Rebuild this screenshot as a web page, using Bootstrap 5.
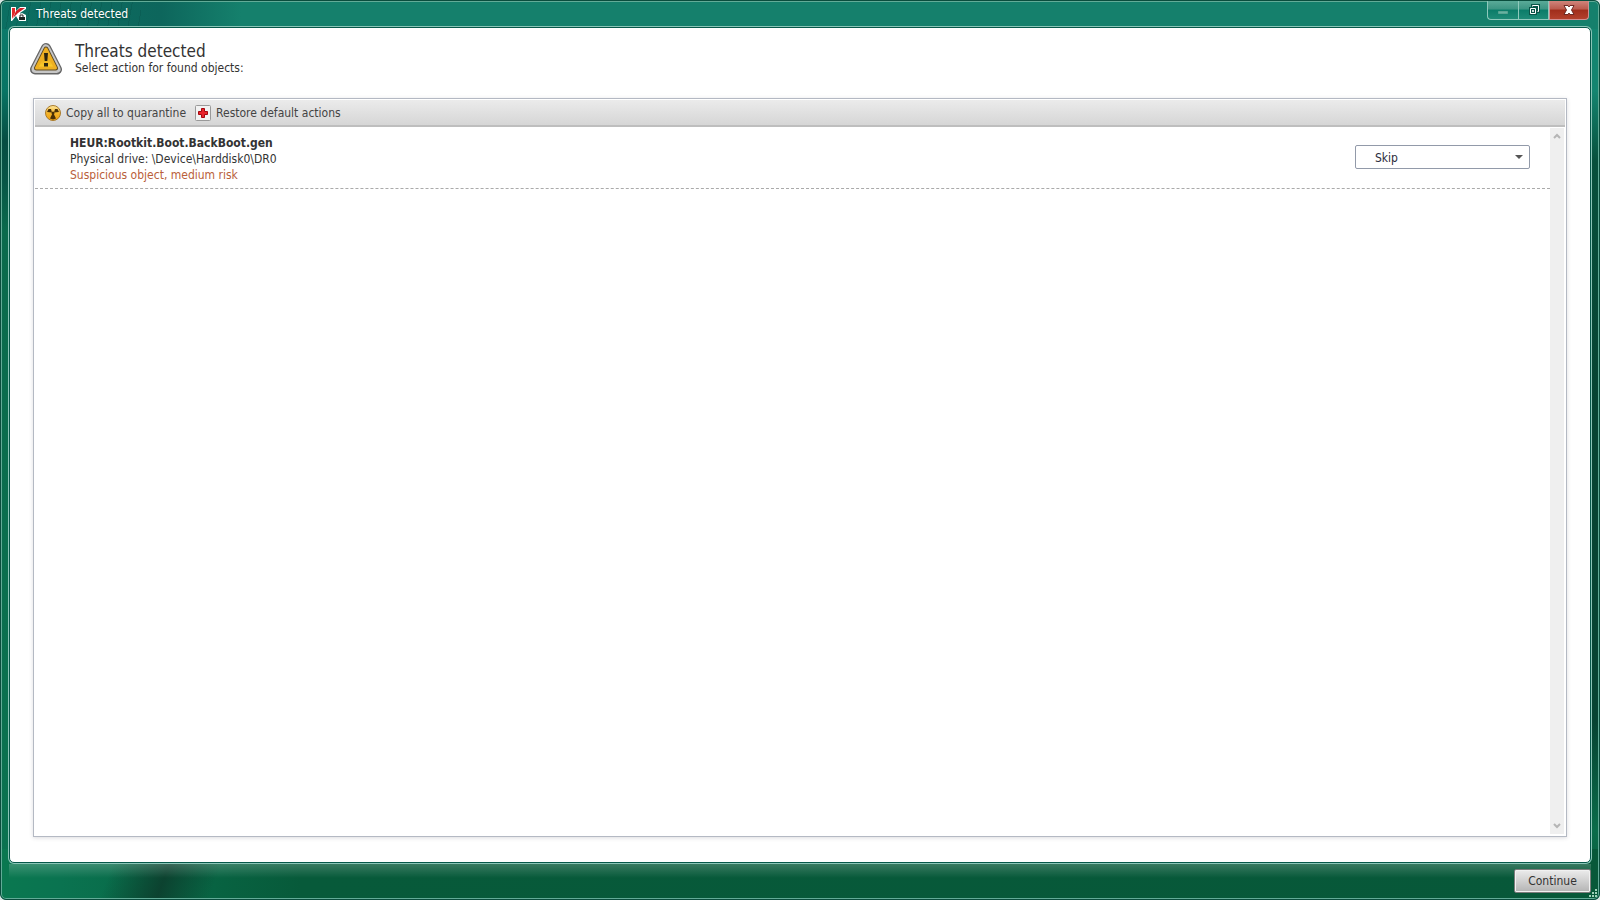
<!DOCTYPE html>
<html lang="en">
<head>
<meta charset="utf-8">
<meta name="viewport" content="width=device-width, initial-scale=1">
<title>Threats detected</title>
<link rel="stylesheet" href="https://cdn.jsdelivr.net/npm/bootstrap@5.3.0/dist/css/bootstrap.min.css">
<style>
  body { font-family: "DejaVu Sans Condensed", "Noto Sans", sans-serif; font-size: 12px; line-height: 16px; color: #333; background: #d9e4e2; }
  .app-window {
    border: 1px solid #0a4d3d; border-radius: 6px; overflow: hidden; padding: 0 8px 6px;
    box-shadow: inset 0 0 0 1px #62ab97;
    background:
      linear-gradient(110deg, transparent 28%, rgba(12,62,45,.9) 52%, transparent 74%) 50px 100% / 220px 50px no-repeat,
      linear-gradient(90deg, #0a7850 0, #0a7350 60px, #075a3a 300px, #075839 100%) 0 100% / 100% 50px no-repeat,
      repeating-linear-gradient(100deg, transparent 0 9px, rgba(0,50,45,.15) 9px 10px) 0 0 / 140px 28px no-repeat,
      linear-gradient(90deg, #0b6f62 0, #0d665c 160px, #15806c 240px, #15806c 100%) 0 0 / 100% 28px no-repeat,
      linear-gradient(180deg, #0c7c6c 0, #087464 90px, #064d42 140px, #075546 180px, #0a6a4c 230px, #0a7350 100%) 0 0 / 20px 100% no-repeat,
      linear-gradient(180deg, #148570 0, #148570 90px, #07503c 160px, #064332 400px, #064332 720px, #0a6c4a 830px, #075839 100%) 100% 0 / 20px 100% no-repeat,
      #0a6c50;
  }
  .title-bar { height: 25px; padding: 0 2px 0 2px; color: #fff; }
  .title-text { padding-top: 5px; gap: 9px; text-shadow: 0 1px 2px #04483c; }
  .win-btn { height: 19px; width: 31px; padding: 0; border: 1px solid #8ec9bc; border-top: 0; border-radius: 0; background: linear-gradient(#5aaa98 0, #3c9583 45%, #0b7c69 50%, #1e8b77 100%); }
  .win-min { border-bottom-left-radius: 4px; border-right: 0; }
  .win-close { width: 40px; border-color: #cf8f92; border-bottom-right-radius: 4px; background: linear-gradient(#d0847b 0, #bb5a4d 45%, #a02d1b 50%, #b3402c 100%); }
  .client-area { background: #fff; border: 1px solid #07584a; border-radius: 5px; padding: 14px 22px 25px 20px; box-shadow: 0 0 0 1px #8ac5b7; margin-top: 1px; }
  .page-heading { font-size: 17px; line-height: 18px; margin: 0; font-weight: 400; }
  .head-row { padding-bottom: 22px; gap: 13px; }
  .threat-panel { margin-left: 3px; margin-right: 1px; border: 1px solid #b4b9c3; padding: 1px; box-shadow: 0 1px 4px rgba(60,60,80,.18); background: #fff; }
  .tool-strip { height: 27px; background: linear-gradient(#ebebeb, #d6d6d6); border-bottom: 2px solid #bebebe; padding-left: 10px; gap: 9px; }
  .tool-btn { border: 0; background: none; padding: 0; color: #444; gap: 5px; }
  .threat-item { border-bottom: 1px dashed #aaa; padding: 8px 20px 5px 35px; }
  .risk-text { color: #b9603a; }
  .action-select { width: 175px; height: 24px; margin-top: 10px; font-size: 12px; line-height: 16px; padding: 4px 24px 2px 19px; border: 1px solid #929aa9; border-radius: 2px; color: #2b2b3a; background-size: 8px 4px; background-position: right 6px center; background-image: url("data:image/svg+xml,%3csvg xmlns='http://www.w3.org/2000/svg' viewBox='0 0 8 4'%3e%3cpath fill='%23555' d='M0 0h8L4 4z'/%3e%3c/svg%3e"); }
  .scroll-track { width: 14px; background: #efefef; margin: 1px 1px 1px 0; padding: 4px 0; }
  .bottom-bar { margin-top: 1px; padding-top: 5px; background: linear-gradient(rgba(255,255,255,.2), transparent 14px); }
  .continue-btn { width: 77px; height: 24px; padding: 0; color: #333; border: 1px solid #7c7c7c; border-radius: 2px; background: linear-gradient(#ececec, #b4b4b4); box-shadow: inset 0 0 0 1px #f1f1f1; }
  .size-grip { right: 1px; bottom: 1px; }
</style>
</head>
<body>
<div class="app-window position-relative d-flex flex-column vh-100">
  <header class="title-bar d-flex justify-content-between align-items-start flex-shrink-0">
    <div class="title-text d-flex align-items-center">
      <svg width="16" height="16" viewBox="0 0 16 16" aria-hidden="true">
        <path d="M0 1h5v4l4-4h6v2L9 7l5 7v1H8L5 10l-4 5H0z" fill="#fff"/>
        <path d="M1 2h3v5l-3 6z" fill="#e02a2a"/><path d="M2 12l3-7 4-3h5L7 7z" fill="#d11f26"/>
        <path d="M7 9l4-2 4 2v6H8V12z" fill="#fff"/><path d="M8 11h6v3H8z" fill="#1c2422"/><path d="M9 11V9h3v2" fill="none" stroke="#1c2422"/>
      </svg>
      <span>Threats detected</span>
    </div>
    <div class="d-flex">
      <button class="win-btn win-min d-flex align-items-center justify-content-center" aria-label="Minimize"><svg width="12" height="12" viewBox="0 0 12 12"><path d="M1.500 7.500h9v2h-9z" fill="#66b3a2" stroke="#5aa493"/></svg></button>
      <button class="win-btn d-flex align-items-center justify-content-center" aria-label="Restore"><svg width="12" height="12" viewBox="0 0 12 12"><path d="M4.500 3.500v-2h6v6h-2" fill="none" stroke="#0a5548" stroke-width="3"/><path d="M1 3h8v8H1z" fill="#0a5548"/><path d="M4.500 2.500v-1h6v6h-1M2.500 4.500h5v5h-5z" fill="none" stroke="#fff"/><path d="M4.500 6.500h1v1h-1z" stroke="#fff" fill="#fff"/></svg></button>
      <button class="win-btn win-close d-flex align-items-center justify-content-center" aria-label="Close"><svg width="12" height="12" viewBox="0 0 12 12"><path d="M1 1.500h4l1 1.500 1-1.500h4L8.500 6l2.500 4.500H7L6 9l-1 1.500H1L3.500 6z" fill="#fff" stroke="#6e2a25"/></svg></button>
    </div>
  </header>
  <main class="client-area d-flex flex-column flex-grow-1">
    <div class="head-row d-flex">
      <svg width="32" height="34" viewBox="0 0 32 34" aria-hidden="true">
        <defs>
          <linearGradient id="metal" x2="0" y2="1"><stop stop-color="#777"/><stop offset=".5" stop-color="#d8d8d8"/><stop offset="1" stop-color="#777"/></linearGradient>
          <linearGradient id="amber" x2="0" y2="1"><stop stop-color="#f0a51c"/><stop offset=".5" stop-color="#e9a91f"/><stop offset="1" stop-color="#ffd52e"/></linearGradient>
        </defs>
        <path d="M16 6L27 27.500H5z" fill="#666" stroke="#666" stroke-width="10" stroke-linejoin="round"/>
        <path d="M16 6.500L26.500 27h-21z" fill="url(#metal)" stroke="#c6c6c6" stroke-width="8" stroke-linejoin="round"/>
        <path d="M16 7L25.500 26h-19z" fill="#5e4a22" stroke="#5e4a22" stroke-width="5" stroke-linejoin="round"/>
        <path d="M16 7L25.500 26h-19z" fill="url(#amber)" stroke="#eeb022" stroke-width="3" stroke-linejoin="round"/>
        <path d="M14 11h4l-.7 8h-2.600zM14 21h4v3.500h-4z" fill="#2b2410"/>
      </svg>
      <div>
        <h1 class="page-heading">Threats detected</h1>
        <p class="m-0">Select action for found objects:</p>
      </div>
    </div>
    <section class="threat-panel d-flex flex-column flex-grow-1">
      <div class="tool-strip d-flex align-items-center">
        <button class="tool-btn d-flex align-items-center">
          <svg width="16" height="16" viewBox="0 0 16 16" aria-hidden="true">
            <defs><linearGradient id="gold" x2="0" y2="1"><stop stop-color="#ffe9a0"/><stop offset=".5" stop-color="#f5b52a"/><stop offset="1" stop-color="#f0a010"/></linearGradient></defs>
            <circle cx="8" cy="8" r="7.500" fill="url(#gold)" stroke="#a87a2c"/>
            <path d="M2 7l1.500-3L6 4l1 3.500zM14 7l-1.500-3L10 4 9 7.500zM5 13.500L7.200 9h1.600l2.200 4.500-3 1z" fill="#4a3008"/>
            <circle cx="8" cy="8" r="1.500" fill="#4a3008"/>
          </svg>
          Copy all to quarantine
        </button>
        <button class="tool-btn d-flex align-items-center">
          <svg width="16" height="16" viewBox="0 0 16 16" aria-hidden="true">
            <rect x=".5" y=".5" width="15" height="15" rx="1" fill="#f2f2f2" stroke="#999"/>
            <path d="M6.500 3.500h3v3h3v3h-3v3h-3v-3h-3v-3h3z" fill="#e8232b" stroke="#a5060d"/>
          </svg>
          Restore default actions
        </button>
      </div>
      <div class="d-flex flex-grow-1">
        <div class="flex-grow-1">
          <div class="threat-item d-flex justify-content-between align-items-start">
            <div>
              <div class="fw-bold">HEUR:Rootkit.Boot.BackBoot.gen</div>
              <div>Physical drive: \Device\Harddisk0\DR0</div>
              <div class="risk-text">Suspicious object, medium risk</div>
            </div>
            <select class="form-select action-select" aria-label="Action"><option>Skip</option></select>
          </div>
        </div>
        <div class="scroll-track d-flex flex-column justify-content-between align-items-center" aria-hidden="true">
          <svg width="8" height="8" viewBox="0 0 8 8"><path d="M1 6l3-3 3 3" fill="none" stroke="#b5b5b5" stroke-width="2"/></svg>
          <svg width="8" height="8" viewBox="0 0 8 8"><path d="M1 2l3 3 3-3" fill="none" stroke="#b5b5b5" stroke-width="2"/></svg>
        </div>
      </div>
    </section>
  </main>
  <footer class="bottom-bar d-flex justify-content-end"><button class="continue-btn">Continue</button></footer>
  <svg class="size-grip position-absolute" width="9" height="9" viewBox="0 0 9 9" aria-hidden="true"><path d="M6 0h2v2H6zM3 3h2v2H3zM6 3h2v2H6zM0 6h2v2H0zM3 6h2v2H3zM6 6h2v2H6z" fill="#9fd0b9"/></svg>
</div>
<script src="https://cdn.jsdelivr.net/npm/bootstrap@5.3.0/dist/js/bootstrap.bundle.min.js"></script>
</body>
</html>
